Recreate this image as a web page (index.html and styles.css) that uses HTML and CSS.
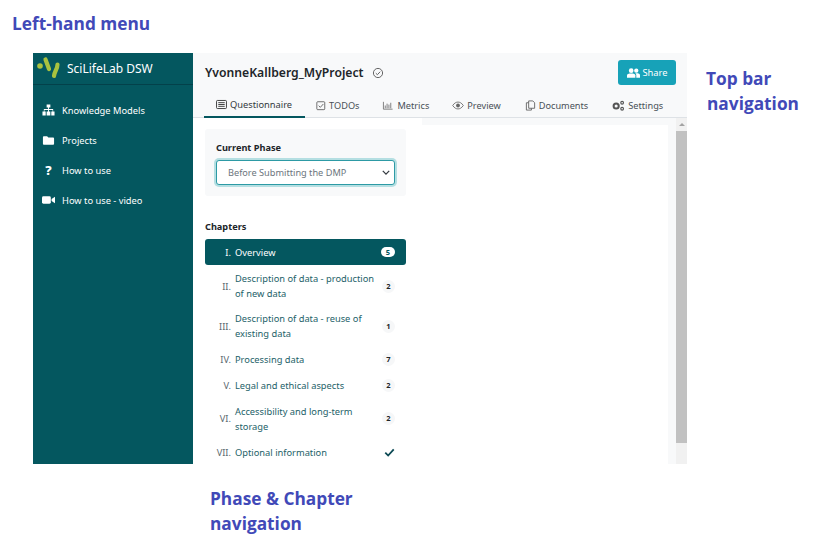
FILE: index.html
```html
<!DOCTYPE html>
<html lang="en">
<head>
<meta charset="utf-8">
<title>SciLifeLab DSW</title>
<link rel="stylesheet" href="styles.css">
</head>
<body>
<div class="canvas">
  <div class="note note-menu">Left-hand menu</div>
  <div class="note note-top">Top bar<br><span class="indent">navigation</span></div>
  <div class="note note-phase">Phase &amp; Chapter<br>navigation</div>

  <div class="app">
    <aside class="sidebar">
      <div class="brand">
        <svg class="logo" viewBox="0 0 25 24"><circle cx="4" cy="10" r="2.800" fill="#a9c23f"/><path d="M9.500 3.500 L13 13" stroke="#a9c23f" stroke-width="4.200" stroke-linecap="round" fill="none"/><path d="M21.500 8.500 C21.500 13 18.500 15 18 20" stroke="#a9c23f" stroke-width="4.200" stroke-linecap="round" fill="none"/></svg>
        <span>SciLifeLab DSW</span>
      </div>
      <nav class="menu">
        <a class="menu-item"><svg class="mi" viewBox="0 0 14 12"><path fill="#fff" d="M5 0h4v3.200H7.500V5H12v2.500h1.500V12h-3.500V7.500h1.400V6H7.500v1.500H9V12H5V7.500h1.500V6H2.600v1.500H4V12H.5V7.500H2V5h4.500V3.200H5z"/></svg><span>Knowledge Models</span></a>
        <a class="menu-item"><svg class="mi" viewBox="0 0 14 12"><path fill="#fff" d="M2 2h3.500l1.300 1.300H12a1 1 0 0 1 1 1V10a1 1 0 0 1-1 1H2a1 1 0 0 1-1-1V3a1 1 0 0 1 1-1z"/></svg><span>Projects</span></a>
        <a class="menu-item"><span class="mi mi-q">?</span><span>How to use</span></a>
        <a class="menu-item"><svg class="mi" viewBox="0 0 14 12"><rect x="0" y="2" width="9.500" height="8" rx="1.500" fill="#fff"/><path fill="#fff" d="M10.300 5l3.700-2.500v7L10.300 7z"/></svg><span>How to use - video</span></a>
      </nav>
    </aside>

    <main class="main">
      <header class="topbar">
        <div class="title-row">
          <h1>YvonneKallberg_MyProject</h1>
          <svg class="saved" viewBox="0 0 12 12"><circle cx="6" cy="6" r="4.600" fill="none" stroke="#666" stroke-width="1"/><path d="M3.800 6.200l1.600 1.500 2.800-3" fill="none" stroke="#666" stroke-width="1"/></svg>
          <button class="share"><svg class="share-ic" viewBox="0 0 14 10"><circle cx="4.500" cy="2.500" r="2.500" fill="#fff"/><circle cx="10" cy="2.500" r="2.300" fill="#fff"/><path fill="#fff" d="M0 10V7.500C0 6 1.500 5.500 4.500 5.500S9 6 9 7.500V10z"/><path fill="#fff" d="M10 10V7.500c0-.8-.3-1.500-1-2 .4-.1.700-.1 1-.1 2.500 0 4 .7 4 2.100V10z"/></svg>Share</button>
        </div>
        <nav class="tabs">
          <a class="tab tab-active"><svg class="ti ti-first" viewBox="0 0 12 12"><rect x=".6" y="1.600" width="10.800" height="8.800" rx="1" fill="none" stroke="#333" stroke-width="1"/><path d="M2.500 4h7M2.500 6h7M2.500 8h7" stroke="#333" stroke-width="1"/></svg>Questionnaire</a>
          <a class="tab"><svg class="ti" viewBox="0 0 12 12"><rect x="1" y="1.500" width="9.500" height="9.500" rx="1" fill="none" stroke="#555" stroke-width="1"/><path d="M3.200 6.200l2 2 3.600-4" fill="none" stroke="#555" stroke-width="1"/></svg>TODOs</a>
          <a class="tab"><svg class="ti ti-wide" viewBox="0 0 12 12"><path d="M1 2v8h10M3 9V6M5 9V4M7 9V5M9 9V3" fill="none" stroke="#777" stroke-width="1"/></svg>Metrics</a>
          <a class="tab"><svg class="ti ti-wide" viewBox="0 0 14 12"><path d="M.8 6C3 2.800 5 2 7 2s4 .8 6.200 4C11 9.200 9 10 7 10S3 9.200.8 6z" fill="none" stroke="#666" stroke-width="1"/><circle cx="7" cy="6" r="2.200" fill="#666"/></svg>Preview</a>
          <a class="tab"><svg class="ti ti-doc" viewBox="0 0 12 12"><path d="M4 1h4.500L10.500 3v6H4z" fill="none" stroke="#666" stroke-width="1"/><path d="M4 3H1.500v8H7V9" fill="none" stroke="#666" stroke-width="1"/></svg>Documents</a>
          <a class="tab"><svg class="ti ti-gear" viewBox="0 0 14 12"><circle cx="5" cy="6.500" r="2.800" fill="none" stroke="#555" stroke-width="2.200"/><circle cx="11.500" cy="3" r="1.500" fill="none" stroke="#555" stroke-width="1.200"/><circle cx="11.500" cy="9.500" r="1.500" fill="none" stroke="#555" stroke-width="1.200"/></svg>Settings</a>
        </nav>
      </header>

      <div class="body">
        <section class="nav-col">
          <div class="phase-card">
            <label class="phase-label">Current Phase</label>
            <div class="select"><span>Before Submitting the DMP</span><svg class="chev" viewBox="0 0 10 6"><path d="M1 1l4 4 4-4" fill="none" stroke="#343a40" stroke-width="1.600"/></svg></div>
          </div>
          <h2 class="chapters-title">Chapters</h2>
          <ul class="chapters">
            <li class="ch ch-active"><span class="num">I.</span><span class="name">Overview</span><span class="badge">5</span></li>
            <li class="ch ch-tall"><span class="num">II.</span><span class="name">Description of data - production of new data</span><span class="badge">2</span></li>
            <li class="ch ch-tall"><span class="num">III.</span><span class="name">Description of data - reuse of existing data</span><span class="badge">1</span></li>
            <li class="ch"><span class="num">IV.</span><span class="name">Processing data</span><span class="badge">7</span></li>
            <li class="ch"><span class="num">V.</span><span class="name">Legal and ethical aspects</span><span class="badge">2</span></li>
            <li class="ch ch-taller"><span class="num">VI.</span><span class="name">Accessibility and long-term storage</span><span class="badge">2</span></li>
            <li class="ch"><span class="num">VII.</span><span class="name">Optional information</span><svg class="tick" viewBox="0 0 12 10"><path d="M1.300 5.200l3.200 3.200 6.200-6.800" fill="none" stroke="#0d4a55" stroke-width="2"/></svg></li>
          </ul>
        </section>
        <section class="content-col"><div class="sheet"></div></section>
        <div class="scrollbar"><div class="arrow"></div><div class="thumb"></div></div>
      </div>
    </main>
  </div>
</div>
</body>
</html>
```

FILE: styles.css
```css
* { box-sizing: border-box; }
html, body { margin: 0; padding: 0; background: #fff; }
body { font-family: "Noto Sans", "Open Sans", sans-serif; overflow: hidden; }
.canvas { position: relative; width: 813px; height: 547px; padding: 53px 0 0 33px; }
.note { position: absolute; font-family: "Open Sans", sans-serif; font-weight: 700; font-size: 17.300px; line-height: 25px; color: #4149b8; white-space: nowrap; }
.note-menu { left: 12px; top: 11px; }
.note-top { left: 706px; top: 66px; }
.indent { margin-left: 1px; }
.note-phase { left: 210px; top: 486px; }

.app { display: flex; width: 654px; height: 411px; }
.sidebar { width: 160px; background: #04575f; color: #fff; flex: none; }
.brand { height: 32px; display: flex; align-items: center; gap: 6px; padding-left: 3px; font-size: 12px; border-bottom: 1px solid #03414a; }
.logo { width: 25px; height: 24px; flex: none; margin-top: -2px; }
.menu { display: flex; flex-direction: column; padding-top: 10px; }
.menu-item { height: 30px; display: flex; align-items: center; gap: 7px; padding-left: 9px; font-size: 9.300px; }
.mi { width: 13px; height: 12px; flex: none; }
.mi-q { font-weight: 800; font-size: 13px; line-height: 12px; text-align: center; }

.main { flex: 1; min-width: 0; display: flex; flex-direction: column; background: #fff; }
.topbar { height: 65px; background: #f8f9fa; border-bottom: 1px solid #dee2e6; padding: 0 11px 0 12px; flex: none; }
.title-row { height: 39px; display: flex; align-items: center; }
h1 { margin: 0; font-size: 12.200px; font-weight: 600; color: #212529; }
.saved { width: 12px; height: 12px; margin-left: 8px; }
.share { margin-left: auto; height: 25px; width: 58px; border: 0; border-radius: 3px; background: #17a2b8; color: #fff; font: 400 9.300px "Noto Sans", sans-serif; display: flex; align-items: center; justify-content: center; gap: 3px; padding: 0; }
.share-ic { width: 13px; height: 10px; }
.tabs { display: flex; height: 26px; margin-left: -1px; }
.tab { display: flex; align-items: center; gap: 3px; font-size: 9.200px; color: #495057; padding: 0 12px 0 11px; white-space: nowrap; }
.tab-active { color: #343a40; border-bottom: 2px solid #04575f; padding: 0 13px 0 12px; font-size: 9.300px; }
.ti { width: 10px; height: 11px; flex: none; }
.ti-first { width: 11px; }
.ti-wide { width: 12px; }
.ti-doc { width: 11px; margin-left: 1px; }
.ti-gear { width: 14px; }

.body { flex: 1; min-height: 0; display: flex; }
.nav-col { width: 229px; flex: none; padding: 11px 16px 0 12px; background: #fff; overflow: hidden; }
.phase-card { background: #f8f9fa; border-radius: 3px; height: 67px; padding: 12px 11px 0 11px; }
.phase-label { display: block; font-size: 9.200px; font-weight: 700; color: #212529; line-height: 13px; margin-bottom: 6px; }
.select { height: 25px; border: 1px solid #2d9aa5; border-radius: 3px; box-shadow: 0 0 0 2px #b5dfe2; background: #fff; display: flex; align-items: center; justify-content: space-between; padding: 0 4px 0 11px; font-size: 9.200px; color: #6c757d; }
.chev { width: 8px; height: 5px; }
.chapters-title { margin: 24px 0 6px; font-size: 9.200px; font-weight: 700; line-height: 13px; color: #212529; }
.chapters { list-style: none; margin: 0; padding: 0; }
.ch { display: flex; align-items: center; min-height: 26px; padding: 5px 11px 5px 0; font-size: 9.300px; line-height: 15px; color: #1d6168; }
.ch-tall { min-height: 40px; }
.ch-taller { min-height: 41px; }
.num { width: 26px; flex: none; text-align: right; margin-right: 4px; color: #5c6a70; }
.name { flex: 1; min-width: 0; padding-right: 4px; }
.ch-active { background: #04575f; border-radius: 3px; color: #fff; margin-bottom: 1px; }
.ch-active .num { color: #fff; }
.badge { width: 13px; height: 13px; line-height: 13px; border-radius: 7px; background: #f6f7f8; color: #212529; font-size: 7.500px; font-weight: 700; text-align: center; flex: none; }
.ch-active .badge { background: #fff; color: #04575f; width: 14px; height: 10px; line-height: 10px; }
.tick { width: 11px; height: 9px; flex: none; }

.content-col { flex: 1; min-width: 0; background: #f8f9fa; padding: 7px 8px 0 0; display: flex; }
.sheet { flex: 1; background: #fff; }
.scrollbar { width: 11px; flex: none; background: #f1f1f1; display: flex; flex-direction: column; }
.arrow { height: 13px; flex: none; position: relative; }
.arrow::after { content: ""; position: absolute; left: 3px; top: 5px; border: 3px solid transparent; border-top: 0; border-bottom: 3px solid #a3a3a3; }
.thumb { height: 312px; background: #c1c1c1; }
```
